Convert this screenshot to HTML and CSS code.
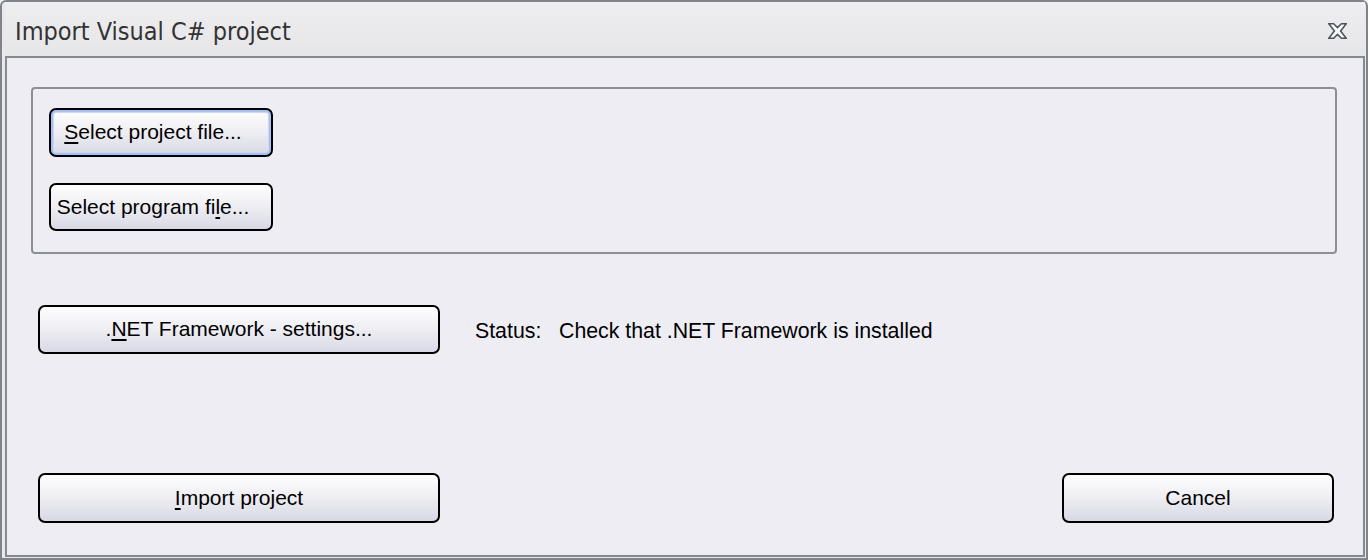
FILE: index.html
```html
<!DOCTYPE html>
<html>
<head>
<meta charset="utf-8">
<link rel="stylesheet" href="styles.css">
</head>
<body>
<div class="window">
  <div class="titlebar">
    <span class="title">Import Visual C# project</span>
    <svg class="close" width="19" height="16" viewBox="0 0 19 16">
      <polygon points="0.8,0.8 5.6,0.8 9.5,4.6 13.4,0.8 18.2,0.8 12.6,8 18.2,15.2 13.4,15.2 9.5,11.4 5.6,15.2 0.8,15.2 6.4,8" fill="#fafafc" stroke="#50545c" stroke-width="1.6" stroke-linejoin="miter"/>
    </svg>
  </div>
  <div class="content">
    <div class="group">
      <button class="btn btn-small focused"><u>S</u>elect project file...</button>
      <button class="btn btn-small">Select program fi<u>l</u>e...</button>
    </div>
    <div class="row net-row">
      <button class="btn btn-wide">.<u>N</u>ET Framework - settings...</button>
      <div class="status"><span class="status-label">Status:</span><span>Check that .NET Framework is installed</span></div>
    </div>
    <div class="row bottom-row">
      <button class="btn btn-wide btn-tall"><u>I</u>mport project</button>
      <button class="btn btn-cancel btn-tall">Cancel</button>
    </div>
  </div>
</div>
</body>
</html>
```
FILE: styles.css
```css
* { box-sizing: border-box; }
html, body { margin: 0; padding: 0; background: #eeedf2; }
.window {
  width: 1368px;
  height: 560px;
  border: 2px solid #80848a;
  border-radius: 6px 6px 0 0;
  background: #e9e9ed;
  display: flex;
  flex-direction: column;
  padding: 0 1px 1px 3px;
}
.titlebar {
  height: 54px;
  flex: none;
  display: flex;
  align-items: center;
  justify-content: space-between;
  padding: 0 18px 0 10px;
  background: linear-gradient(#eeeef0, #e6e6e9);
}
.title {
  font-family: "DejaVu Sans Condensed", "DejaVu Sans", sans-serif;
  font-size: 25px;
  color: #333333;
  margin-top: 4px;
}
.close { display: block; margin-top: 3px; }
.content {
  flex: 1;
  border: 2px solid #858990;
  background: #eeedf3;
  padding: 29px 26px 32px 24px;
  display: flex;
  flex-direction: column;
  font-family: "Liberation Sans", Arial, sans-serif;
}
.group {
  border: 2px solid #8c8f95;
  border-radius: 4px;
  height: 167px;
  flex: none;
  padding: 19px 16px 0 16px;
  display: flex;
  flex-direction: column;
  align-items: flex-start;
  gap: 26px;
}
.btn {
  font-family: "Liberation Sans", Arial, sans-serif;
  font-size: 21px;
  color: #000;
  border: 2px solid #000;
  border-radius: 7px;
  background: linear-gradient(#fefefe 0%, #f1f1f5 40%, #d9d9e5 100%);
  height: 49px;
  padding: 0 0 1px 0;
  margin: 0;
  text-align: center;
  flex: none;
}
.btn u { text-decoration: underline; text-underline-offset: 3px; }
.btn-small { width: 224px; padding-right: 16px; }
.btn-small + .btn-small { height: 48px; }
.focused { box-shadow: inset 0 0 0 2px #a7c1f0, inset 0 0 0 3px #c8d8f6; }
.btn-wide { width: 402px; }
.btn-cancel { width: 272px; margin-right: 3px; }
.btn-tall { height: 50px; }
.row { display: flex; align-items: center; flex: none; }
.net-row { margin-top: 51px; padding-left: 7px; }
.bottom-row {
  margin-top: auto;
  padding-left: 7px;
  justify-content: space-between;
}
.status {
  margin-left: 35px;
  font-size: 21.3px;
  color: #000;
  display: flex;
  padding-top: 3px;
}
.status-label { width: 84px; }
```
